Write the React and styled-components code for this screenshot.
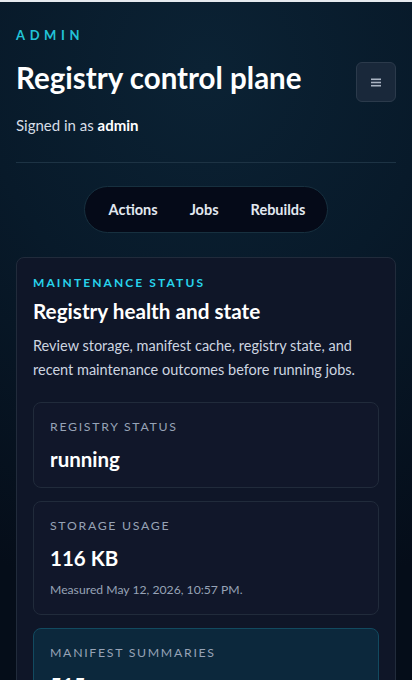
import React from "react";
import styled, { createGlobalStyle } from "styled-components";

const GlobalStyle = createGlobalStyle`
  html, body {
    margin: 0;
    padding: 0;
    background: #050c17;
  }
  body {
    font-family: Lato, "Noto Sans", sans-serif;
    color: #f8fafc;
    -webkit-font-smoothing: antialiased;
  }
`;

const Page = styled.div`
  height: 680px;
  border-top: 2px solid #e6eaef;
  background: radial-gradient(ellipse 120% 80% at 50% 10%, #0b2234 0%, #081a2a 45%, #050d19 100%);
  padding: 25px 16px 0;
  box-sizing: border-box;
  overflow: hidden;
`;

const Header = styled.header`
  display: flex;
  justify-content: space-between;
  align-items: flex-start;
`;

const HeaderText = styled.div`
  display: flex;
  flex-direction: column;
`;

const Eyebrow = styled.div`
  font-size: 13px;
  font-weight: 700;
  letter-spacing: 4.6px;
  color: #22c3d8;
  line-height: 16px;
`;

const Title = styled.h1`
  margin: 17px 0 0;
  font-size: 29.5px;
  line-height: 36px;
  font-weight: 700;
  color: #ffffff;
`;

const Signed = styled.p`
  margin: 19px 0 0;
  font-size: 15px;
  line-height: 20px;
  color: #d6dde6;
  strong {
    color: #ffffff;
    font-weight: 700;
  }
`;

const MenuButton = styled.button`
  margin-top: 35px;
  width: 40px;
  height: 40px;
  border-radius: 6px;
  border: 1px solid #2b3a4b;
  background: #19283a;
  display: flex;
  align-items: center;
  justify-content: center;
  padding: 0;
  cursor: pointer;
`;

const Divider = styled.hr`
  margin: 27px 0 0;
  border: none;
  border-top: 1px solid #1d3344;
`;

const NavWrap = styled.div`
  display: flex;
  justify-content: center;
  margin-top: 23px;
`;

const Pill = styled.nav`
  display: flex;
  align-items: center;
  gap: 32px;
  padding: 0 22px 0 24px;
  height: 47px;
  box-sizing: border-box;
  border-radius: 999px;
  background: #050a18;
  border: 1px solid #17303f;
`;

const NavItem = styled.span`
  font-size: 14.5px;
  font-weight: 700;
  color: #e2e8f0;
`;

const Card = styled.section`
  margin-top: 24px;
  border: 1px solid #212b3b;
  border-radius: 8px;
  background: #0f1628;
  padding: 17px 16px 16px;
`;

const Kicker = styled.div`
  font-size: 12px;
  font-weight: 700;
  letter-spacing: 2.1px;
  color: #27d3ec;
  line-height: 16px;
`;

const CardTitle = styled.h2`
  margin: 6px 0 0;
  font-size: 20.7px;
  line-height: 28px;
  font-weight: 700;
  color: #ffffff;
`;

const Desc = styled.p`
  margin: 9px 0 0;
  font-size: 14.5px;
  line-height: 24px;
  color: #cdd5e0;
`;

const Stats = styled.div`
  display: flex;
  flex-direction: column;
  gap: 13px;
  margin-top: 20px;
`;

const Stat = styled.div`
  border: 1px solid ${(p) => (p.accent ? "#124a60" : "#212b3b")};
  background: ${(p) => (p.accent ? "#0c283c" : "#11172a")};
  border-radius: 8px;
  padding: 15px 16px 15px;
`;

const StatLabel = styled.div`
  font-size: 12.3px;
  letter-spacing: 1.7px;
  color: #97a3b6;
  line-height: 18px;
`;

const StatValue = styled.div`
  margin-top: 10px;
  font-size: 20.5px;
  font-weight: 700;
  line-height: 26px;
  color: #ffffff;
`;

const StatNote = styled.div`
  margin-top: 10px;
  font-size: 12.2px;
  line-height: 18px;
  color: #97a3b6;
`;

function MenuIcon() {
  return (
    <svg width="10" height="9" viewBox="0 0 10 9">
      <rect x="0" y="0.5" width="10" height="1.6" fill="#aab4c2" />
      <rect x="0" y="3.7" width="10" height="1.6" fill="#aab4c2" />
      <rect x="0" y="6.9" width="10" height="1.6" fill="#aab4c2" />
    </svg>
  );
}

export default function App() {
  return (
    <>
      <GlobalStyle />
      <Page>
        <Header>
          <HeaderText>
            <Eyebrow>ADMIN</Eyebrow>
            <Title>Registry control plane</Title>
            <Signed>
              Signed in as <strong>admin</strong>
            </Signed>
          </HeaderText>
          <MenuButton aria-label="Menu">
            <MenuIcon />
          </MenuButton>
        </Header>
        <Divider />
        <NavWrap>
          <Pill>
            <NavItem>Actions</NavItem>
            <NavItem>Jobs</NavItem>
            <NavItem>Rebuilds</NavItem>
          </Pill>
        </NavWrap>
        <Card>
          <Kicker>MAINTENANCE STATUS</Kicker>
          <CardTitle>Registry health and state</CardTitle>
          <Desc>
            Review storage, manifest cache, registry state, and recent maintenance outcomes before running jobs.
          </Desc>
          <Stats>
            <Stat>
              <StatLabel>REGISTRY STATUS</StatLabel>
              <StatValue>running</StatValue>
            </Stat>
            <Stat>
              <StatLabel>STORAGE USAGE</StatLabel>
              <StatValue>116 KB</StatValue>
              <StatNote>Measured May 12, 2026, 10:57 PM.</StatNote>
            </Stat>
            <Stat accent>
              <StatLabel>MANIFEST SUMMARIES</StatLabel>
              <StatValue>515</StatValue>
            </Stat>
          </Stats>
        </Card>
      </Page>
    </>
  );
}
